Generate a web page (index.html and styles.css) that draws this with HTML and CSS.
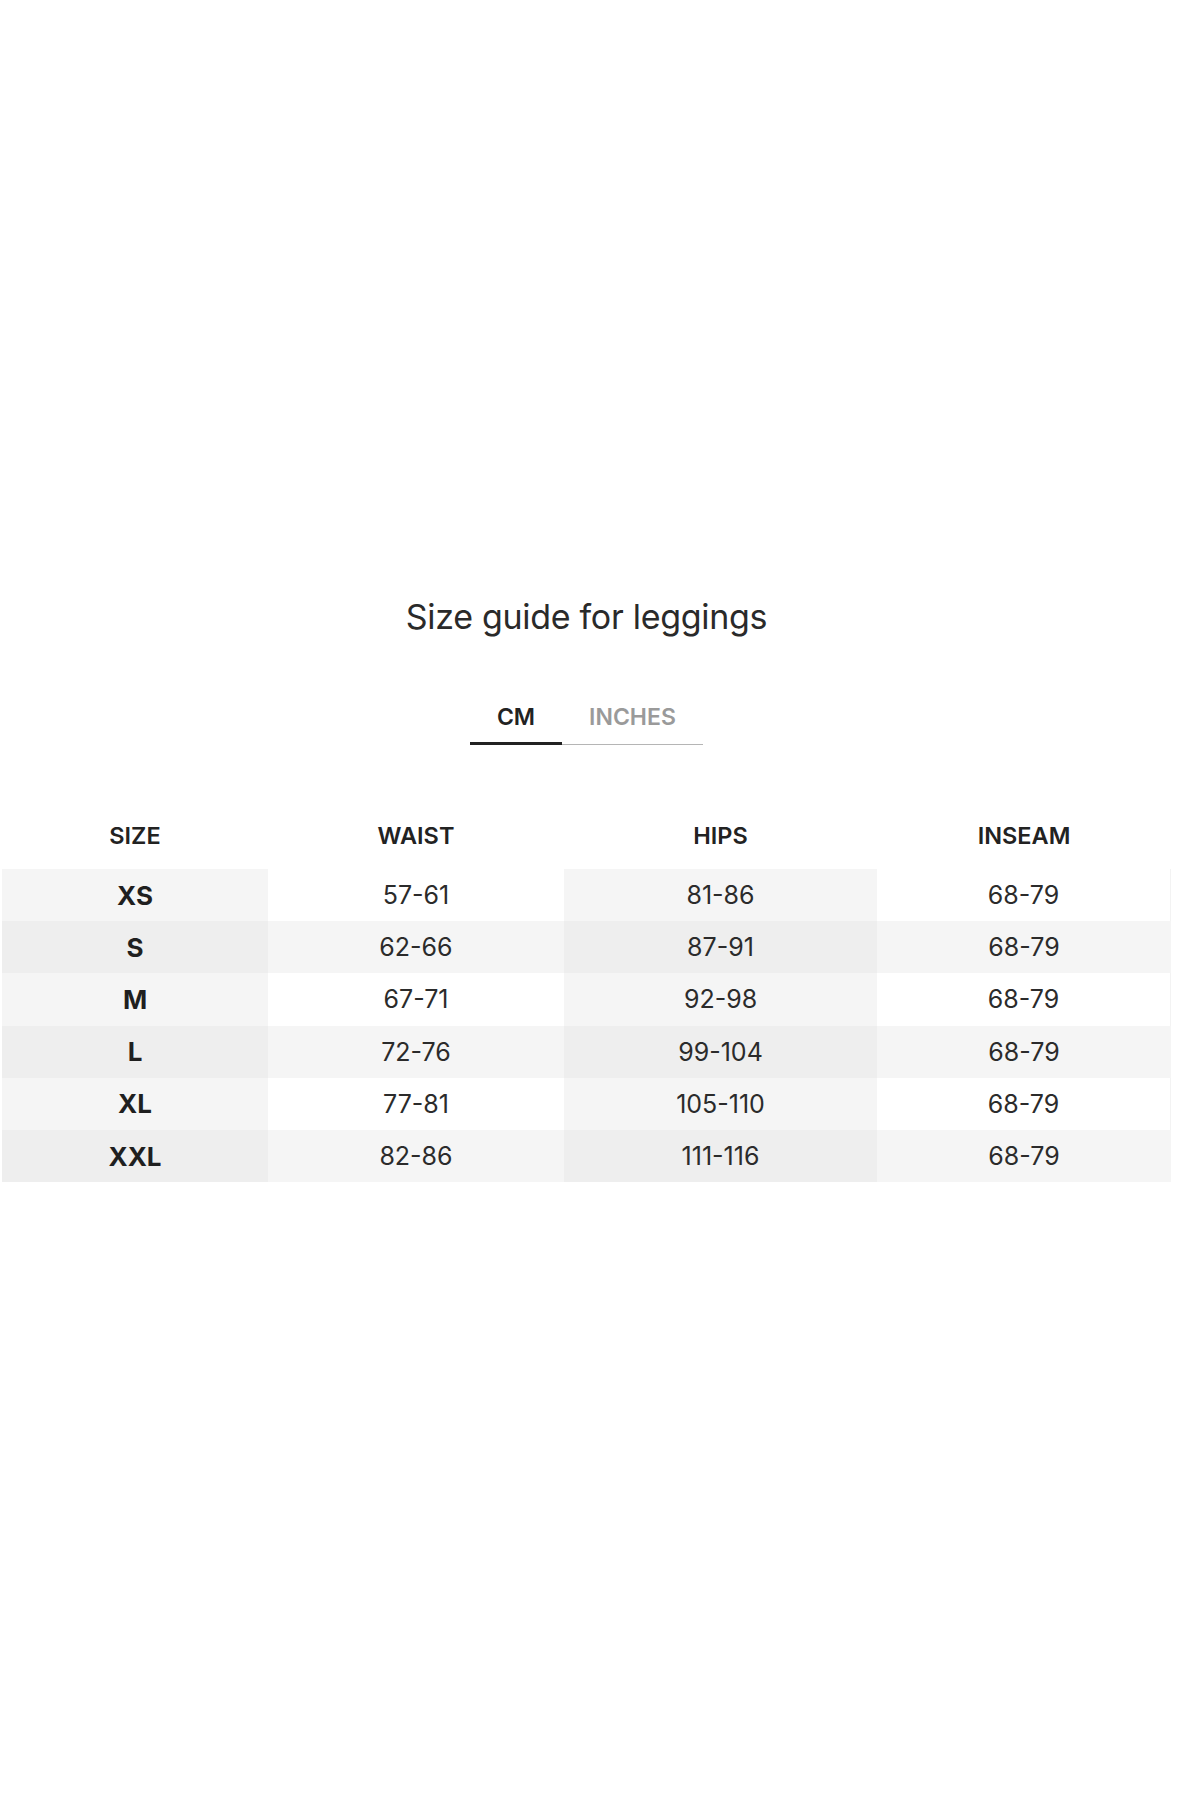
FILE: index.html
```html
<!DOCTYPE html>
<html>
<head>
<meta charset="utf-8">
<link rel="stylesheet" href="styles.css">
</head>
<body>
<div class="page">
  <h1 class="title">Size guide for leggings</h1>
  <div class="tabs">
    <div class="tab active">CM</div>
    <div class="tab">INCHES</div>
  </div>
  <div class="table">
    <div class="row head">
      <div class="c c1">SIZE</div><div class="c c2">WAIST</div><div class="c c3">HIPS</div><div class="c c4">INSEAM</div>
    </div>
    <div class="row odd">
      <div class="c c1">XS</div><div class="c c2">57-61</div><div class="c c3">81-86</div><div class="c c4">68-79</div>
    </div>
    <div class="row even">
      <div class="c c1">S</div><div class="c c2">62-66</div><div class="c c3">87-91</div><div class="c c4">68-79</div>
    </div>
    <div class="row odd">
      <div class="c c1">M</div><div class="c c2">67-71</div><div class="c c3">92-98</div><div class="c c4">68-79</div>
    </div>
    <div class="row even">
      <div class="c c1">L</div><div class="c c2">72-76</div><div class="c c3">99-104</div><div class="c c4">68-79</div>
    </div>
    <div class="row odd">
      <div class="c c1">XL</div><div class="c c2">77-81</div><div class="c c3">105-110</div><div class="c c4">68-79</div>
    </div>
    <div class="row even">
      <div class="c c1">XXL</div><div class="c c2">82-86</div><div class="c c3">111-116</div><div class="c c4">68-79</div>
    </div>
  </div>
</div>
</body>
</html>
```
FILE: styles.css
```css
html, body {
  margin: 0;
  padding: 0;
  background: #fff;
}
body {
  font-family: Inter, "Noto Sans", sans-serif;
  color: #222;
}
.page {
  width: 1169px;
  margin-left: 2px;
  padding-top: 596px;
  display: flex;
  flex-direction: column;
  align-items: center;
}
.title {
  margin: 0;
  font-size: 34px;
  font-weight: 400;
  line-height: 42px;
  color: #2a2a2a;
  letter-spacing: -0.3px;
}
.tabs {
  margin-top: 57px;
  display: flex;
  border-bottom: 1px solid #b5b5b5;
  width: 233px;
}
.tab {
  height: 50px;
  display: flex;
  align-items: center;
  justify-content: center;
  font-size: 23px;
  font-weight: 600;
  color: #9a9a9a;
  box-sizing: border-box;
  margin-bottom: -1px;
  padding-bottom: 6px;
}
.tab:first-child {
  width: 92px;
}
.tab:last-child {
  width: 141px;
}
.tab.active {
  color: #222;
  border-bottom: 3px solid #222;
  padding-bottom: 3px;
}
.table {
  margin-top: 56px;
  width: 100%;
  display: flex;
  flex-direction: column;
}
.row {
  display: grid;
  grid-template-columns: 266px 296px 313px 294px;
  height: 52.2px;
}
.row.head {
  height: 68px;
}
.c {
  display: flex;
  align-items: center;
  justify-content: center;
  font-size: 25px;
  font-weight: 400;
  color: #2b2b2b;
}
.c1 {
  font-size: 26px;
  font-weight: 700;
  color: #1f1f1f;
}
.head .c {
  font-size: 23.5px;
  font-weight: 600;
  color: #222;
}
.odd .c1, .odd .c3 { background: #f5f5f5; }
.odd .c2, .odd .c4 { background: #ffffff; }
.even .c1, .even .c3 { background: #eeeeee; }
.even .c2, .even .c4 { background: #f5f5f5; }
.odd .c4 { border-right: 1px solid #f3f3f3; box-sizing: border-box; }
```
